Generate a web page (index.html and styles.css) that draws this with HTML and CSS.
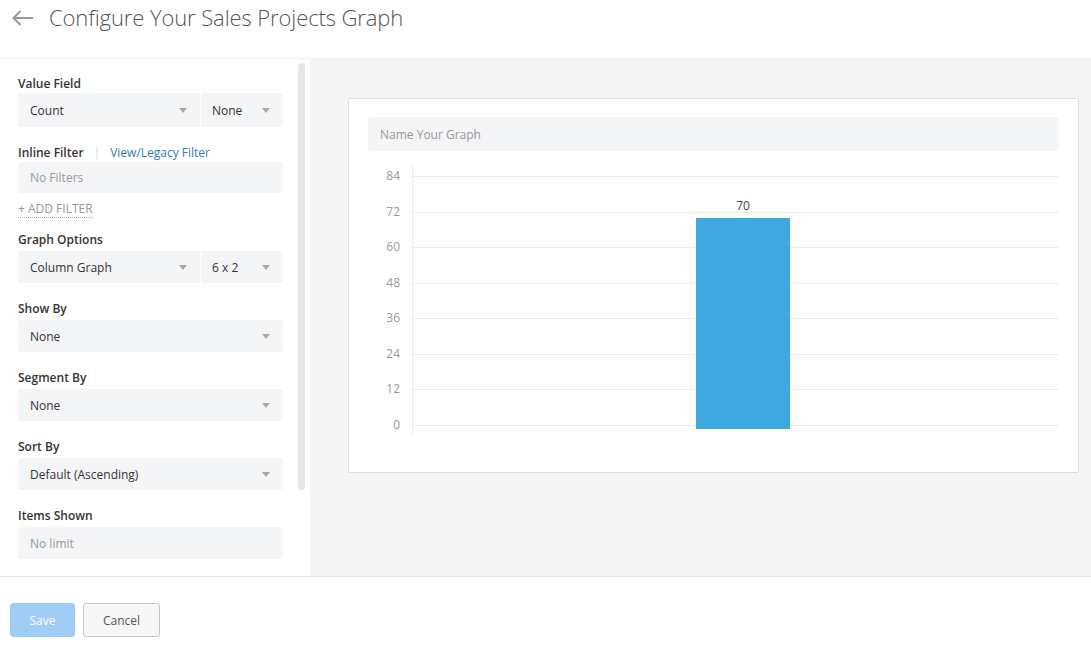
FILE: index.html
```html
<!DOCTYPE html>
<html>
<head>
<meta charset="utf-8">
<link rel="stylesheet" href="styles.css">
</head>
<body>
<div class="page">
  <header class="header">
    <svg class="back" width="22" height="16" viewBox="0 0 22 16"><path d="M1.5 8H21M8.5 1L1.5 8l7 7" fill="none" stroke="#9a9a9a" stroke-width="2"/></svg>
    <h1 class="title">Configure Your Sales Projects Graph</h1>
  </header>
  <main class="main">
    <aside class="side">
      <div class="form">
        <div class="group first">
          <div class="label">Value Field</div>
          <div class="split tall">
            <div class="select grow"><span>Count</span><i class="caret"></i></div>
            <div class="select narrow"><span>None</span><i class="caret"></i></div>
          </div>
        </div>
        <div class="group filter">
          <div class="label row">Inline Filter <span class="sep">|</span> <a class="link">View/Legacy Filter</a></div>
          <div class="input muted">No Filters</div>
        </div>
        <div class="add"><span>+ ADD FILTER</span></div>
        <div class="group">
          <div class="label">Graph Options</div>
          <div class="split">
            <div class="select grow"><span>Column Graph</span><i class="caret"></i></div>
            <div class="select narrow"><span>6 x 2</span><i class="caret"></i></div>
          </div>
        </div>
        <div class="group">
          <div class="label">Show By</div>
          <div class="select"><span>None</span><i class="caret"></i></div>
        </div>
        <div class="group">
          <div class="label">Segment By</div>
          <div class="select"><span>None</span><i class="caret"></i></div>
        </div>
        <div class="group">
          <div class="label">Sort By</div>
          <div class="select"><span>Default (Ascending)</span><i class="caret"></i></div>
        </div>
        <div class="group">
          <div class="label">Items Shown</div>
          <div class="input muted">No limit</div>
        </div>
      </div>
      <div class="scroll"><div class="thumb"></div></div>
    </aside>
    <section class="preview">
      <div class="card">
        <div class="name">Name Your Graph</div>
        <svg class="chart" width="692" height="293" viewBox="0 0 692 293">
          <g stroke="#ebebeb" stroke-width="1">
            <line x1="45" x2="690" y1="16.5" y2="16.5"/>
            <line x1="45" x2="690" y1="52.5" y2="52.5"/>
            <line x1="45" x2="690" y1="87.5" y2="87.5"/>
            <line x1="45" x2="690" y1="123.5" y2="123.5"/>
            <line x1="45" x2="690" y1="158.5" y2="158.5"/>
            <line x1="45" x2="690" y1="194.5" y2="194.5"/>
            <line x1="45" x2="690" y1="229.5" y2="229.5"/>
            <line x1="45" x2="690" y1="265.5" y2="265.5"/>
            <line x1="44.5" x2="44.5" y1="6" y2="275"/>
          </g>
          <g class="ytick" text-anchor="end">
            <text x="32" y="20">84</text>
            <text x="32" y="56">72</text>
            <text x="32" y="91">60</text>
            <text x="32" y="127">48</text>
            <text x="32" y="162">36</text>
            <text x="32" y="198">24</text>
            <text x="32" y="233">12</text>
            <text x="32" y="269">0</text>
          </g>
          <rect x="328" y="58" width="94" height="211" fill="#3ea9e0"/>
          <text class="val" x="375" y="50" text-anchor="middle">70</text>
        </svg>
      </div>
    </section>
  </main>
  <footer class="footer">
    <button class="btn save">Save</button>
    <button class="btn cancel">Cancel</button>
  </footer>
</div>
</body>
</html>
```
FILE: styles.css
```css
* { box-sizing: border-box; }
html, body { margin: 0; padding: 0; }
body {
  font-family: "Open Sans", "Liberation Sans", sans-serif;
  font-size: 12px;
  color: #333;
  background: #fff;
  width: 1091px;
  height: 647px;
  overflow: hidden;
}
.page { display: flex; flex-direction: column; height: 647px; }
.header {
  height: 59px;
  display: flex;
  align-items: flex-start;
  padding: 4px 0 0 12px;
  border-bottom: 1px solid #f0f0f0;
}
.back { margin-top: 6px; }
.title {
  margin: 0 0 0 15px;
  font-size: 22px;
  font-weight: 300;
  color: #555;
  line-height: 26px;
  letter-spacing: -0.1px;
}
.main { display: flex; height: 518px; border-bottom: 1px solid #e6e6e6; }
.side { width: 310px; display: flex; background: #fff; }
.form { width: 265px; margin-left: 18px; padding-top: 17px; }
.scroll { width: 7px; margin-left: 15px; padding-top: 4px; }
.thumb { width: 7px; height: 427px; background: #e6e6e6; border-radius: 4px; }
.group { margin-bottom: 18px; }
.label {
  font-weight: 600;
  font-size: 12px;
  line-height: 16px;
  color: #333;
  margin-bottom: 3px;
}
.group.first .label { margin-bottom: 1px; }
.group.filter { margin-bottom: 8px; }
.group.filter .label { margin-bottom: 1px; }
.label.row { display: flex; align-items: center; }
.sep { color: #dcdcdc; font-weight: 400; margin: 0 10px 0 10px; }
.link { color: #2d7cc1; font-weight: 400; }
.split { display: flex; gap: 1px; }
.split .grow { flex: 1; border-radius: 3px 0 0 3px; }
.split .narrow { width: 82px; padding-left: 11px; border-radius: 0 3px 3px 0; }
.select, .input {
  height: 32px;
  background: #f4f5f7;
  border-radius: 3px;
  display: flex;
  align-items: center;
  padding: 0 12px;
  color: #333;
  font-size: 12px;
}
.split.tall .select { height: 34px; }
.select span { flex: 1; }
.caret {
  width: 0; height: 0;
  border-left: 4px solid transparent;
  border-right: 4px solid transparent;
  border-top: 5px solid #a8a8a8;
  margin-right: 1px;
}
.input.muted { color: #999; }
.filter .input { height: 31px; }
.add { margin-bottom: 15px; line-height: 16px; }
.add span { color: #999; border-bottom: 1px dotted #aaa; }
.preview {
  flex: 1;
  background: #f5f5f5;
  padding: 39px 12px 0 38px;
}
.card {
  width: 731px;
  height: 375px;
  background: #fff;
  border: 1px solid #dedede;
  border-radius: 2px;
  padding: 18px 19px 0 19px;
}
.name {
  height: 34px;
  background: #f4f5f7;
  border-radius: 3px;
  display: flex;
  align-items: center;
  padding-left: 12px;
  color: #999;
  font-size: 12px;
}
.chart { display: block; margin-top: 9px; font-family: "Open Sans", "Liberation Sans", sans-serif; }
.ytick text { font-size: 12px; fill: #999; }
.val { font-size: 12px; fill: #444; }
.footer { flex: 1; display: flex; align-items: flex-start; gap: 8px; padding: 26px 0 0 10px; }
.btn {
  font-family: "Open Sans", "Liberation Sans", sans-serif;
  font-size: 12px;
  height: 34px;
  border-radius: 3px;
  cursor: pointer;
}
.save { width: 65px; background: #9fcdf5; color: #fff; border: 1px solid #9fcdf5; }
.cancel { width: 77px; background: #f7f7f8; color: #555; border: 1px solid #c8c8c8; }
```
